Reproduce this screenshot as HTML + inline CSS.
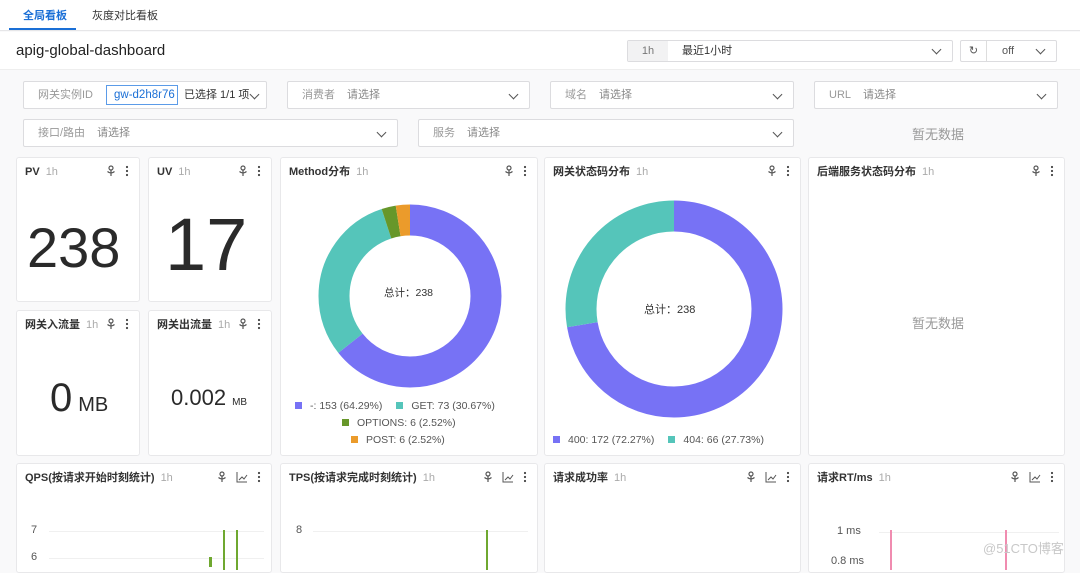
<!DOCTYPE html>
<html><head><meta charset="utf-8"><style>
*{box-sizing:border-box;margin:0;padding:0}
body{width:1080px;height:562px;overflow:hidden;background:#f9f9fa;font-family:"Liberation Sans","Noto Sans CJK SC",sans-serif;color:#333;position:relative}
.a{position:absolute}
.card{position:absolute;background:#fff;border:1px solid #e8e8ea;border-radius:3px}
.t{position:absolute;left:8px;top:7px;font-size:11px;line-height:14px;font-weight:bold;color:#333;white-space:nowrap}
.t span{font-weight:normal;color:#aaa;margin-left:6px}
.ic{position:absolute;top:7px;right:10px;display:flex;gap:9px;align-items:center}
.sel{position:absolute;background:#fff;border:1px solid #dcdcdf;border-radius:2px;height:28px;font-size:11px;color:#999;line-height:26px;padding-left:14px;white-space:nowrap}
.sel b{font-weight:normal;color:#888;margin-left:12px}
.chev{position:absolute;right:12px;top:9px;width:7px;height:7px;border-right:1.3px solid #555;border-bottom:1.3px solid #555;transform:rotate(45deg)}
.leg{position:absolute;font-size:10.5px;color:#555;white-space:nowrap}
.sq{display:inline-block;width:7px;height:7px;margin-right:8px;vertical-align:0}
.nd{position:absolute;font-size:13px;color:#999}
</style></head><body>
<svg width="0" height="0" style="position:absolute"><defs>
<g id="pin"><circle cx="5" cy="3" r="2" fill="none" stroke="#555" stroke-width="1.2"/><path d="M5 5v6M1.5 6.5q3.5 3 7 0" fill="none" stroke="#555" stroke-width="1.2"/></g>
<g id="dots"><circle cx="2" cy="2" r="1.1" fill="#444"/><circle cx="2" cy="6" r="1.1" fill="#444"/><circle cx="2" cy="10" r="1.1" fill="#444"/></g>
<g id="ln"><path d="M1 1v10h10M3 9l3-3 2 2 3-4" fill="none" stroke="#555" stroke-width="1"/></g>
</defs></svg>

<div class="a" style="left:0;top:0;width:1080px;height:31px;border-bottom:1px solid #e6e6e8;background:#fff"></div>
<div class="a" style="left:23px;top:9px;font-size:11px;line-height:14px;font-weight:bold;color:#1a6fd6">全局看板</div>
<div class="a" style="left:9px;top:28px;width:67px;height:2px;background:#1a6fd6"></div>
<div class="a" style="left:92px;top:9px;font-size:11px;line-height:14px;color:#333">灰度对比看板</div>
<div class="a" style="left:0;top:32px;width:1080px;height:38px;background:#fff;border-bottom:1px solid #eee"></div>
<div class="a" style="left:16px;top:42px;font-size:15px;color:#222">apig-global-dashboard</div>
<div class="sel" style="left:627px;top:40px;width:326px;height:22px;line-height:20px;padding-left:0"><span style="display:inline-block;width:40px;background:#f2f2f3;text-align:center;color:#777">1h</span><span style="color:#333;margin-left:14px">最近1小时</span><i class="chev" style="top:5px"></i></div>
<div class="sel" style="left:960px;top:40px;width:97px;height:22px;line-height:20px;padding-left:0"><span style="display:inline-block;width:26px;border-right:1px solid #ddd;text-align:center;color:#555">↻</span><span style="color:#555;margin-left:15px">off</span><i class="chev" style="top:5px"></i></div>

<div class="sel" style="left:23px;top:81px;width:244px"><span>网关实例ID</span><span style="position:absolute;left:82px;top:3px;height:20px;line-height:18px;width:72px;border:1px solid #5b9be8;color:#1a6fd6;padding-left:7px;overflow:hidden;font-size:11.5px">gw-d2h8r76</span><span style="position:absolute;left:160px;color:#333">已选择 1/1 项</span><i class="chev" style="right:8px"></i></div>
<div class="sel" style="left:287px;top:81px;width:243px">消费者<b>请选择</b><i class="chev"></i></div>
<div class="sel" style="left:550px;top:81px;width:244px">域名<b>请选择</b><i class="chev"></i></div>
<div class="sel" style="left:814px;top:81px;width:244px">URL<b>请选择</b><i class="chev"></i></div>
<div class="sel" style="left:23px;top:119px;width:375px">接口/路由<b>请选择</b><i class="chev"></i></div>
<div class="sel" style="left:418px;top:119px;width:376px">服务<b>请选择</b><i class="chev"></i></div>
<div class="nd" style="left:912px;top:124px">暂无数据</div>

<div class="card" style="left:16px;top:157px;width:124px;height:145px"><div class="t">PV<span>1h</span></div><div class="ic"><svg width="10" height="12"><use href="#pin"/></svg><svg width="4" height="12"><use href="#dots"/></svg></div><div class="a" style="left:10px;top:57px;font-size:56px;color:#2a2a2a">238</div></div>
<div class="card" style="left:148px;top:157px;width:124px;height:145px"><div class="t">UV<span>1h</span></div><div class="ic"><svg width="10" height="12"><use href="#pin"/></svg><svg width="4" height="12"><use href="#dots"/></svg></div><div class="a" style="left:16px;top:44px;font-size:74px;color:#2a2a2a">17</div></div>
<div class="card" style="left:16px;top:310px;width:124px;height:146px"><div class="t">网关入流量<span>1h</span></div><div class="ic"><svg width="10" height="12"><use href="#pin"/></svg><svg width="4" height="12"><use href="#dots"/></svg></div><div class="a" style="left:33px;top:65px;font-size:40px;color:#2a2a2a">0<span style="font-size:20px;margin-left:6px">MB</span></div></div>
<div class="card" style="left:148px;top:310px;width:124px;height:146px"><div class="t">网关出流量<span>1h</span></div><div class="ic"><svg width="10" height="12"><use href="#pin"/></svg><svg width="4" height="12"><use href="#dots"/></svg></div><div class="a" style="left:22px;top:74px;font-size:22px;color:#2a2a2a">0.002<span style="font-size:10px;margin-left:6px">MB</span></div></div>

<div class="card" style="left:280px;top:157px;width:258px;height:299px"><div class="t">Method分布<span>1h</span></div><div class="ic"><svg width="10" height="12"><use href="#pin"/></svg><svg width="4" height="12"><use href="#dots"/></svg></div>
<svg class="a" style="left:36px;top:45px" width="186" height="186" viewBox="0 0 186 186"><g transform="rotate(-90 93 93)" fill="none" stroke-width="31">
<circle cx="93" cy="93" r="76" stroke="#7772f5" stroke-dasharray="307 1000"/>
<circle cx="93" cy="93" r="76" stroke="#55c5ba" stroke-dasharray="0 307 146.4 1000"/>
<circle cx="93" cy="93" r="76" stroke="#67972a" stroke-dasharray="0 453.4 12 1000"/>
<circle cx="93" cy="93" r="76" stroke="#eb9b2b" stroke-dasharray="0 465.4 12.2 1000"/></g></svg>
<div class="a" style="left:103px;top:127px;font-size:10.5px;color:#333">总计：238</div>
<div class="leg" style="left:14px;top:242px"><i class="sq" style="background:#7772f5"></i>-: 153 (64.29%)<i class="sq" style="background:#55c5ba;margin-left:14px"></i>GET: 73 (30.67%)</div>
<div class="leg" style="left:61px;top:259px"><i class="sq" style="background:#67972a"></i>OPTIONS: 6 (2.52%)</div>
<div class="leg" style="left:70px;top:276px"><i class="sq" style="background:#eb9b2b"></i>POST: 6 (2.52%)</div>
</div>

<div class="card" style="left:544px;top:157px;width:257px;height:299px"><div class="t">网关状态码分布<span>1h</span></div><div class="ic"><svg width="10" height="12"><use href="#pin"/></svg><svg width="4" height="12"><use href="#dots"/></svg></div>
<svg class="a" style="left:19px;top:41px" width="220" height="220" viewBox="0 0 220 220"><g transform="rotate(-90 110 110)" fill="none" stroke-width="31">
<circle cx="110" cy="110" r="93" stroke="#7772f5" stroke-dasharray="422.3 1000"/>
<circle cx="110" cy="110" r="93" stroke="#55c5ba" stroke-dasharray="0 422.3 162.1 1000"/></g></svg>
<div class="a" style="left:99px;top:143px;font-size:11px;color:#333">总计：238</div>
<div class="leg" style="left:8px;top:276px"><i class="sq" style="background:#7772f5"></i>400: 172 (72.27%)<i class="sq" style="background:#55c5ba;margin-left:14px"></i>404: 66 (27.73%)</div>
</div>

<div class="card" style="left:808px;top:157px;width:257px;height:299px"><div class="t">后端服务状态码分布<span>1h</span></div><div class="ic"><svg width="10" height="12"><use href="#pin"/></svg><svg width="4" height="12"><use href="#dots"/></svg></div><div class="nd" style="left:103px;top:155px">暂无数据</div></div>

<div class="card" style="left:16px;top:463px;width:256px;height:110px"><div class="t">QPS(按请求开始时刻统计)<span>1h</span></div><div class="ic"><svg width="10" height="12"><use href="#pin"/></svg><svg width="12" height="12"><use href="#ln"/></svg><svg width="4" height="12"><use href="#dots"/></svg></div>
<div class="a" style="left:14px;top:60px;font-size:11px;color:#555">7</div><div class="a" style="left:14px;top:87px;font-size:11px;color:#555">6</div>
<div class="a" style="left:32px;top:67px;width:215px;border-top:1px solid #f0f0f0"></div><div class="a" style="left:32px;top:94px;width:215px;border-top:1px solid #f0f0f0"></div>
<div class="a" style="left:192px;top:93px;width:3px;height:10px;background:#6fa830"></div><div class="a" style="left:206px;top:66px;width:2px;height:40px;background:#6fa830"></div><div class="a" style="left:219px;top:66px;width:2px;height:40px;background:#6fa830"></div></div>
<div class="card" style="left:280px;top:463px;width:258px;height:110px"><div class="t">TPS(按请求完成时刻统计)<span>1h</span></div><div class="ic"><svg width="10" height="12"><use href="#pin"/></svg><svg width="12" height="12"><use href="#ln"/></svg><svg width="4" height="12"><use href="#dots"/></svg></div>
<div class="a" style="left:15px;top:60px;font-size:11px;color:#555">8</div><div class="a" style="left:32px;top:67px;width:215px;border-top:1px solid #f0f0f0"></div>
<div class="a" style="left:205px;top:66px;width:2px;height:40px;background:#6fa830"></div></div>
<div class="card" style="left:544px;top:463px;width:257px;height:110px"><div class="t">请求成功率<span>1h</span></div><div class="ic"><svg width="10" height="12"><use href="#pin"/></svg><svg width="12" height="12"><use href="#ln"/></svg><svg width="4" height="12"><use href="#dots"/></svg></div></div>
<div class="card" style="left:808px;top:463px;width:257px;height:110px"><div class="t">请求RT/ms<span>1h</span></div><div class="ic"><svg width="10" height="12"><use href="#pin"/></svg><svg width="12" height="12"><use href="#ln"/></svg><svg width="4" height="12"><use href="#dots"/></svg></div>
<div class="a" style="left:28px;top:61px;font-size:11px;color:#555">1 ms</div><div class="a" style="left:22px;top:91px;font-size:11px;color:#555">0.8 ms</div>
<div class="a" style="left:70px;top:68px;width:180px;border-top:1px solid #f0f0f0"></div>
<div class="a" style="left:81px;top:66px;width:2px;height:40px;background:#f08cb0"></div><div class="a" style="left:196px;top:66px;width:2px;height:40px;background:#f08cb0"></div></div>
<div class="a" style="left:983px;top:538px;font-size:13px;color:#c8c8c8">@51CTO博客</div>
</body></html>
